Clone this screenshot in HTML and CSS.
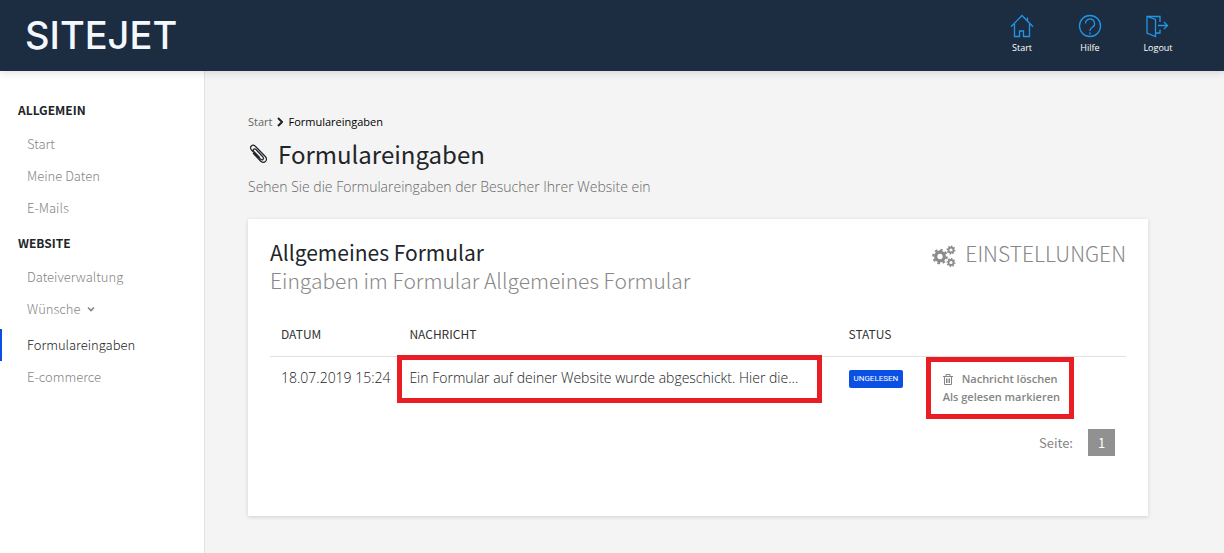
FILE: index.html
```html
<!DOCTYPE html>
<html lang="de">
<head>
<meta charset="utf-8">
<meta name="viewport" content="width=device-width, initial-scale=1">
<title>Sitejet – Formulareingaben</title>
<link rel="stylesheet" href="styles.css">
</head>
<body>
<header class="topbar">
  <a class="logo" href="#">SITEJET</a>
  <nav class="topnav">
    <a class="topnav-item" href="#">
      <svg class="topnav-icon" viewBox="0 0 24 24"><path d="M1 12.700 12 1.500 23 12.700M4.500 10v12.500h5v-5.500h4v5.500h6V10M17.500 7V3.500"/></svg>
      <span>Start</span>
    </a>
    <a class="topnav-item" href="#">
      <svg class="topnav-icon" viewBox="0 0 24 24"><circle cx="12" cy="12" r="10.500"/><path d="M7.500 9.500a4.500 4.500 0 1 1 6.500 4c-1.500.8-2 1.500-2 3.500M12 18.500v2"/></svg>
      <span>Hilfe</span>
    </a>
    <a class="topnav-item" href="#">
      <svg class="topnav-icon" viewBox="0 0 24 24"><path d="M1 2.500 9.500 5.500v17L1 19zM1 2.500h13V8M14 15.500V19H9.500M12 11.500h9.500M18 8l3.500 3.500L18 15"/></svg>
      <span>Logout</span>
    </a>
  </nav>
</header>
<div class="layout">
  <aside class="sidebar">
    <h2 class="group-title">ALLGEMEIN</h2>
    <ul class="menu">
      <li><a class="menu-link" href="#">Start</a></li>
      <li><a class="menu-link" href="#">Meine Daten</a></li>
      <li><a class="menu-link" href="#">E-Mails</a></li>
    </ul>
    <h2 class="group-title">WEBSITE</h2>
    <ul class="menu">
      <li><a class="menu-link" href="#">Dateiverwaltung</a></li>
      <li><a class="menu-link" href="#">Wünsche <svg class="caret" viewBox="0 0 8 6"><path d="M1 1.500l3 3 3-3"/></svg></a></li>
      <li class="menu-current"><a class="menu-link active" href="#" aria-current="page">Formulareingaben</a></li>
      <li><a class="menu-link" href="#">E-commerce</a></li>
    </ul>
  </aside>
  <main class="content">
    <nav class="breadcrumb">
      <a class="crumb" href="#">Start</a>
      <svg class="crumb-arrow" viewBox="0 0 6 10"><path d="M1 1l4 4-4 4"/></svg>
      <span class="crumb-current">Formulareingaben</span>
    </nav>
    <h1 class="page-title">
      <svg class="clip" viewBox="0 0 20 20"><path d="M8 5.500l7 7.500c1.500 2-.8 3.800-2.400 2.200L3.500 6C1 3 4.300-.4 7.300 2.300l10 10.200c3 3.700-.8 7.800-4.600 4.700L5 9.200M8 5.500C6.300 4 4.300 5.800 5.800 7.500l6 6.200"/></svg>
      Formulareingaben
    </h1>
    <p class="page-lead">Sehen Sie die Formulareingaben der Besucher Ihrer Website ein</p>
    <section class="card">
      <div class="card-head">
        <div>
          <h2 class="card-title">Allgemeines Formular</h2>
          <p class="card-lead">Eingaben im Formular Allgemeines Formular</p>
        </div>
        <a class="settings" href="#">
          <svg class="gears" viewBox="0 0 24 22">
            <circle class="teeth teeth-big" cx="8" cy="11.500" r="6.600" pathLength="16"/>
            <circle class="ring ring-big" cx="8" cy="11.500" r="4.300"/>
            <circle class="teeth" cx="19" cy="5" r="3.700" pathLength="16"/>
            <circle class="ring" cx="19" cy="5" r="2.500"/>
            <circle class="teeth" cx="19" cy="17.500" r="3.700" pathLength="16"/>
            <circle class="ring" cx="19" cy="17.500" r="2.500"/>
          </svg>
          EINSTELLUNGEN
        </a>
      </div>
      <table class="entries">
        <colgroup><col class="col-date"><col class="col-message"><col class="col-status"><col class="col-actions"></colgroup>
        <thead>
          <tr><th>DATUM</th><th>NACHRICHT</th><th>STATUS</th><th aria-label="Aktionen"></th></tr>
        </thead>
        <tbody>
          <tr>
            <td class="date">18.07.2019 15:24</td>
            <td class="marked mark-message">Ein Formular auf deiner Website wurde abgeschickt. Hier die...</td>
            <td><span class="badge">UNGELESEN</span></td>
            <td class="marked mark-actions">
              <button class="action" type="button"><svg class="trash" viewBox="0 0 10 11"><path d="M0 2.500h10M3 2.500v-2h4v2M1.500 2.500v8h7v-8M3.500 4.500V9M5 4.500V9M6.500 4.500V9"/></svg>Nachricht löschen</button>
              <button class="action" type="button">Als gelesen markieren</button>
            </td>
          </tr>
        </tbody>
      </table>
      <nav class="pager">
        <span>Seite:</span>
        <a class="page" href="#" aria-current="page">1</a>
      </nav>
    </section>
  </main>
</div>
</body>
</html>
```
FILE: styles.css
```css
:root {
  --source: "Noto Sans CJK SC", "Noto Sans", sans-serif;
  --open: "Open Sans", "Noto Sans", sans-serif;
}
* { box-sizing: border-box; }
body {
  margin: 0;
  min-height: 100vh;
  display: flex;
  flex-direction: column;
  background: #f4f4f4;
  color: #212529;
  font-family: var(--source);
}
h1, h2, p, ul { margin: 0; padding: 0; }
ul { list-style: none; }
a { color: inherit; text-decoration: none; }
svg { fill: none; stroke: currentColor; flex: none; }

.topbar {
  display: flex;
  align-items: center;
  justify-content: space-between;
  height: 71px;
  padding: 0 30px 2px 25px;
  background: #1c2d42;
  color: #fff;
  box-shadow: 0 1px 8px rgba(0, 0, 0, .15);
  z-index: 1;
}
.logo { font: 500 38px/40px Inter, sans-serif; color: #f3f8ff; }
.topnav { display: flex; }
.topnav-item {
  display: flex;
  flex-direction: column;
  align-items: center;
  gap: 3px;
  width: 68px;
  padding-right: 4px;
  font: 500 9px/14px var(--open);
}
.topnav-icon { width: 24px; height: 24px; color: #2196e8; stroke-width: 1.3; }

.layout { display: flex; flex: 1; }
.sidebar {
  width: 205px;
  flex: none;
  padding-top: 29px;
  background: #fff;
  border-right: 1px solid #e2e2e2;
}
.group-title {
  padding-left: 18px;
  font-size: 12px;
  font-weight: 700;
  line-height: 20px;
}
.menu { padding: 8px 0 9px; }
.menu-link {
  display: flex;
  align-items: center;
  gap: 6px;
  padding-left: 27px;
  color: #858585;
  font-size: 13px;
  font-weight: 300;
  line-height: 32px;
}
.menu-current { padding-top: 4px; }
.active { color: #222; box-shadow: inset 2px 0 #0b4fe0; }
.caret { width: 8px; height: 6px; stroke-width: 1.6; }

.content { flex: 1; min-width: 0; max-width: 943px; padding: 40px 0 36px 43px; margin-right: 76px; }
.breadcrumb {
  display: flex;
  align-items: center;
  gap: 5px;
  font: 400 11px/22px var(--open);
}
.crumb { color: #666; }
.crumb-arrow { width: 6px; height: 10px; color: #222; stroke-width: 2; }
.crumb-current { color: #000; font-weight: 500; }
.page-title {
  display: flex;
  align-items: center;
  gap: 10px;
  margin-top: 3px;
  font-size: 24px;
  font-weight: 400;
  line-height: 36px;
}
.clip { width: 20px; height: 20px; stroke-width: 1.2; }
.page-lead { margin-top: 4px; color: #666; font: 300 14px/22px var(--open); }

.card {
  margin-top: 21px;
  min-height: 297px;
  padding: 20px 22px 40px;
  background: #fff;
  box-shadow: 0 1px 4px rgba(0, 0, 0, .15);
}
.card-head { display: flex; justify-content: space-between; align-items: flex-start; }
.card-title { font-size: 21px; font-weight: 400; line-height: 26px; }
.card-lead { color: #888; font-size: 21px; font-weight: 300; line-height: 30px; }
.settings {
  display: flex;
  align-items: center;
  gap: 9px;
  color: #888;
  font-size: 21px;
  font-weight: 300;
  line-height: 26px;
}
.gears { width: 24px; height: 22px; margin-top: 6px; color: #8c8c8c; }
.ring { stroke-width: 1.8; }
.ring-big { stroke-width: 3.2; }
.teeth { stroke-width: 1.5; stroke-dasharray: 1; }
.teeth-big { stroke-width: 2.4; }

.entries { width: 100%; margin-top: 17px; table-layout: fixed; border-collapse: collapse; }
.col-date { width: 15%; }
.col-message { width: 51.300%; }
.col-status { width: 11%; }
.entries th {
  padding: 11px;
  border-bottom: 1px solid #e0e0e0;
  color: #333;
  font-size: 12px;
  font-weight: 400;
  line-height: 22px;
  text-align: left;
}
.entries td {
  padding: 10px 11px;
  color: #222;
  font: 300 14px/22px var(--open);
  vertical-align: top;
  white-space: nowrap;
}
.badge {
  display: inline-block;
  padding: 0 5px;
  border-radius: 2px;
  background: #0b50e4;
  color: #fff;
  font: 400 8px/18px Roboto, sans-serif;
  vertical-align: middle;
}
.marked { position: relative; }
.marked::after {
  content: "";
  position: absolute;
  border: 5px solid #ea1c24;
  pointer-events: none;
}
.mark-message::after { inset: -2px 16px 16px -1px; }
.mark-actions::after { inset: 0 52px 0 -6px; }
.entries .mark-actions { padding-bottom: 13px; }
.action {
  display: flex;
  align-items: center;
  gap: 9px;
  padding: 0;
  border: 0;
  background: none;
  color: #858585;
  font: 600 11px/18px var(--open);
  cursor: pointer;
}
.entries td .action:first-child { margin-top: 3px; }
.trash { width: 10px; height: 11px; }
.pager {
  display: flex;
  justify-content: flex-end;
  align-items: center;
  gap: 15px;
  margin-top: 10px;
  padding-right: 11px;
  color: #858585;
  font-size: 13px;
  line-height: 27px;
}
.page { width: 27px; background: #919191; color: #fff; text-align: center; }
```
